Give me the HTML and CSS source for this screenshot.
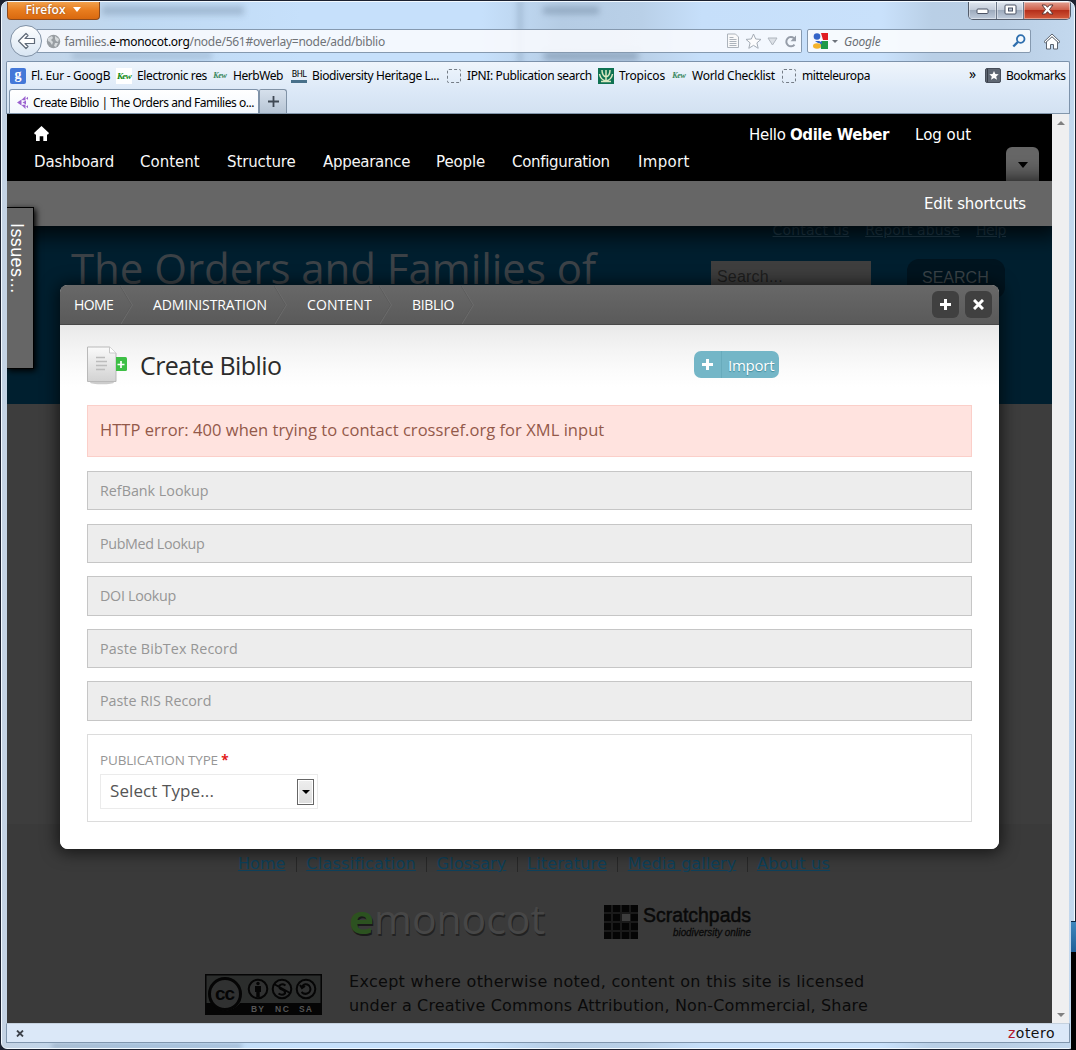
FILE: index.html
```
<!DOCTYPE html>
<html lang="en">
<head>
<meta charset="utf-8">
<title>Create Biblio | The Orders and Families of Monocotyledons</title>
<link rel="stylesheet" href="styles.css">
</head>
<body>
<div class="window">
  <i class="smudge s1"></i><i class="smudge s2"></i><i class="smudge s3"></i><i class="smudge s4"></i><i class="smudge s5"></i><i class="smudge s6"></i>

  <header class="titlebar">
    <div class="ff-button"><span>Firefox</span><i class="caret"></i></div>
    <div class="controls">
      <span class="ctl min"><svg width="13" height="7"><rect x="1" y="1" width="11" height="4.5" rx="1" fill="#fff" stroke="#4b5264"/></svg></span>
      <span class="ctl max"><svg width="13" height="11"><rect x="1" y="1" width="11" height="9" rx="1" fill="#fff" stroke="#4b5264"/><rect x="4.5" y="4" width="4" height="3" fill="#b9c2cf" stroke="#4b5264"/></svg></span>
      <span class="ctl close"><svg width="13" height="11" viewBox="0 0 13 11"><path d="M1 1h3.5l2 2.3L8.500 1H12L8.500 5.500 12 10H8.500L6.500 7.700 4.500 10H1l3.500-4.500z" fill="#fff" stroke="#5b3535"/></svg></span>
    </div>
  </header>

  <div class="navbar">
    <div class="back"><svg width="19" height="18" viewBox="0 0 19 18"><path d="M1.500 9L9 1.500l2 2L8 6.500h9.500v5H8l3 3-2 2z" fill="#fff" stroke="#5f6a78" stroke-width="1.200" stroke-linejoin="round"/></svg></div>
    <div class="urlbar">
      <svg class="globe" width="15" height="15" viewBox="0 0 15 15"><circle cx="7.500" cy="7.500" r="6.700" fill="#989da2"/><path d="M2 4l4-2 1 2-2 2 2 2-1 3-2-3-2-1zM9 2l4 3-1 3-2-1-1-2zM9 9l3 0-2 4-2-1z" fill="#d6dadd"/></svg>
      <span class="url">families.<b>e-monocot.org</b>/node/561#overlay=node/add/biblio</span>
      <div class="url-icons">
        <svg width="14" height="16" viewBox="0 0 14 16"><path d="M1.500 1h8l3 3v10.500h-11z" fill="#fafafa" stroke="#a5acb4"/><path d="M3.500 4.500h4M3.500 6.500h7M3.500 8.500h7M3.500 10.500h7M3.500 12.500h7" stroke="#a5acb4"/></svg>
        <svg width="17" height="17" viewBox="0 0 17 17"><path d="M8.500 1l2.200 5 5.300.4-4.100 3.500 1.300 5.400-4.700-2.900-4.700 2.900 1.300-5.400L1 6.400 6.300 6z" fill="#fdfdfd" stroke="#9ba3ad"/></svg>
        <svg width="11" height="9" viewBox="0 0 11 9"><path d="M1 1h9L5.500 8z" fill="#dadfe5" stroke="#a8afb8"/></svg>
        <svg width="13" height="13" viewBox="0 0 13 13"><path d="M10.500 9.600A4.600 4.600 0 1 1 10 3.300" fill="none" stroke="#8c94a0" stroke-width="2"/><path d="M12 .5v5.800H6.500z" fill="#8c94a0"/></svg>
      </div>
    </div>
    <div class="searchbar">
      <svg width="16" height="16"><rect width="16" height="16" fill="#f7f7fb"/><path d="M9 0h7v7h-5z" fill="#e01c22"/><path d="M8 8h8v8H9z" fill="#1f9a48"/><circle cx="5" cy="3.500" r="3.300" fill="#3465c8"/><path d="M3 8h7v3l-4-1z" fill="#3465c8"/><ellipse cx="5" cy="13" rx="4" ry="2.800" fill="#f4b32b"/><path d="M7 6l4 1-3 2z" fill="#fff"/></svg>
      <i class="caret small"></i>
      <em>Google</em>
      <svg class="mag" width="14" height="14" viewBox="0 0 14 14"><circle cx="8.700" cy="5" r="3.800" fill="#f4f9fd" stroke="#2f6fae" stroke-width="1.800"/><path d="M5.800 8L1.300 12.500" stroke="#2f6fae" stroke-width="2.400"/></svg>
    </div>
    <svg class="home" width="18" height="17" viewBox="0 0 18 17"><path d="M3.500 8.500v7.500h4v-4.500h3V16h4V8.500L9 3.500z" fill="#fff" stroke="#5d6570"/><path d="M1 8.700L9 1l8 7.700-1.300 1.200L9 3.700 2.300 9.900z" fill="#fff" stroke="#5d6570"/></svg>
  </div>

  <div class="toolbox">
    <div class="bookmarks">
      <a><i class="fav goog">g</i><span class="t1">Fl. Eur - GoogB</span></a>
      <a><i class="fav kew bold">Kew</i><span class="t2">Electronic res</span></a>
      <a><i class="fav kew">Kew</i><span class="t3">HerbWeb</span></a>
      <a><i class="fav bhl">BHL</i><span class="t2">Biodiversity Heritage L...</span></a>
      <a><i class="fav blank"></i><span class="t2">IPNI: Publication search</span></a>
      <a><svg class="fav" width="16" height="16"><rect width="16" height="16" fill="#0f7252"/><path d="M8 2v12M8 13C4 12 2 9 1.500 6M8 13c4-1 6-4 6.500-7M8 9C5 8 4 5 4 2M8 9c3-1 4-4 4-7M3 13.500h10" fill="none" stroke="#d9e8c0" stroke-width="1.500"/></svg><span class="t4">Tropicos</span></a>
      <a><i class="fav kew">Kew</i><span class="t1">World Checklist</span></a>
      <a><i class="fav blank"></i><span class="t3">mitteleuropa</span></a>
      <span class="more">»</span>
      <a><svg class="fav" width="16" height="15" viewBox="0 0 16 15"><rect x=".5" y=".5" width="15" height="14" rx="1.500" fill="#5f6773" stroke="#464d59"/><path d="M2.500 1v13" stroke="#383e48"/><path d="M9 3l1.400 3 3.300.3-2.500 2.200.8 3.300L9 10.100l-3 1.700.8-3.300-2.500-2.200L7.600 6z" fill="#fff"/></svg><span class="t5">Bookmarks</span></a>
    </div>
    <div class="tabs">
      <div class="tab"><svg width="11" height="13" viewBox="0 0 11 13"><path d="M0 6.500L4.500 3.500v6zM4.500 4L8.500 0v4.500zM4.500 9l4 4V8.500zM5.500 6.500L9 4.500v4zM9 2.500L11 .8v3zM9 10.500l2 1.700v-3z" fill="#9b63cf"/></svg><span>Create Biblio | The Orders and Families o...</span></div>
      <div class="newtab"><svg width="11" height="11"><path d="M5.500 0v11M0 5.500h11" stroke="#3f4853" stroke-width="1.800"/></svg></div>
    </div>
  </div>

  <div class="viewport">
    <main class="page">
      <div class="admin">
        <svg class="ahome" width="15" height="15" viewBox="0 0 15 15"><path d="M7.500 0L15 7l-1 1.500h-1V15H9.300v-4.800H5.700V15H2V8.500H1L0 7z" fill="#fff"/></svg>
        <nav class="menu"><a class="m1">Dashboard</a><a>Content</a><a class="m1">Structure</a><a class="m2">Appearance</a><a class="m1">People</a><a class="m2">Configuration</a><a class="m3">Import</a></nav>
        <div class="user"><span class="m2">Hello <b>Odile Weber</b></span><a>Log out</a></div>
        <div class="toggle"><i></i></div>
      </div>
      <div class="shortcuts"><a>Edit shortcuts</a></div>
      <section class="banner">
        <h2>The Orders and Families of</h2>
        <div class="banner-right">
          <p class="toplinks"><a>Contact us</a><a>Report abuse</a><a>Help</a></p>
          <div class="searchrow"><span class="field">Search...</span><span class="btn">SEARCH</span></div>
        </div>
      </section>
      <section class="content"></section>
      <footer class="footer">
        <nav class="flinks"><a>Home</a><a class="f3">Classification</a><a>Glossary</a><a class="f2">Literature</a><a>Media gallery</a><a class="f3">About us</a></nav>
        <div class="logos">
          <svg width="202" height="60" viewBox="0 -8 202 60"><g font-family="Open Sans, sans-serif" font-size="40"><text x="3" y="36.500" font-weight="700" fill="#1a1a1a" textLength="25" lengthAdjust="spacingAndGlyphs">e</text><text x="2" y="35" font-weight="700" fill="#2c5220" textLength="25" lengthAdjust="spacingAndGlyphs">e</text><text x="28" y="36.500" font-weight="400" fill="#222" textLength="171" lengthAdjust="spacingAndGlyphs">monocot</text><text x="27" y="35" font-weight="400" fill="#474747" textLength="171" lengthAdjust="spacingAndGlyphs">monocot</text></g></svg>
          <svg width="150" height="38" viewBox="0 0 150 38"><path d="M1 2h34v34H1z" fill="#1a1a1a"/><path d="M19 11h8v7h-8z" fill="#3d3d3d"/><path d="M1 2h7v7H1zM10 2h7v7h-7zM19 2h7v7h-7zM28 2h7v7h-7zM1 11h7v7H1zM10 11h7v7h-7zM28 11h7v7h-7zM1 20h7v7H1zM10 20h7v7h-7zM19 20h7v7h-7zM28 20h7v7h-7zM1 29h7v7H1zM10 29h7v7h-7zM19 29h7v7h-7zM28 29h7v7h-7z" fill="#050505"/><g font-family="Liberation Sans, sans-serif" fill="#090909"><text x="40" y="19" font-size="20" stroke="#090909" stroke-width=".5" textLength="108" lengthAdjust="spacingAndGlyphs">Scratchpads</text><text x="70" y="33" font-size="11" font-style="italic" stroke="#090909" stroke-width=".3" textLength="78" lengthAdjust="spacingAndGlyphs">biodiversity online</text></g></svg>
        </div>
        <div class="license">
          <svg width="117" height="41" viewBox="0 0 117 41"><rect x=".75" y=".75" width="115.500" height="39.500" fill="#2b2d2c" stroke="#050505" stroke-width="1.500"/><path d="M1 29h6c7 10 20 10 28 0h81v11H1z" fill="#050505"/><circle cx="20" cy="20" r="15.500" fill="#303131" stroke="#050505" stroke-width="3"/><text x="10" y="26" font-family="Liberation Sans, sans-serif" font-size="19" font-weight="700" fill="#050505" textLength="20">cc</text><g fill="#303131" stroke="#050505" stroke-width="2"><circle cx="53" cy="15" r="9.300"/><circle cx="77" cy="15" r="9.300"/><circle cx="101" cy="15" r="9.300"/><path d="M69 10l16 9M80.500 11.500q-3.500-2.500-6 0-1 3 2.500 4t3 4q-3 2.500-6.500 0M97 12.500q3-4 7-1 3 4 0 7-4 3-7.500-.5M95 11l2 3 3-2" fill="none"/></g><circle cx="53" cy="9.500" r="1.700" fill="#050505"/><path d="M50 12h6v6h-1.300v5h-3.400v-5H50z" fill="#050505"/><g font-family="Liberation Sans, sans-serif" font-size="8.500" font-weight="700" fill="#555"><text x="46" y="38" textLength="13">BY</text><text x="70" y="38" textLength="14">NC</text><text x="94" y="38" textLength="13">SA</text></g></svg>
          <p><span class="l1">Except where otherwise noted, content on this site is licensed</span><br><span class="l2">under a Creative Commons Attribution, Non-Commercial, Share</span></p>
        </div>
      </footer>

      <aside class="issues"><span>Issues...</span></aside>

      <section class="overlay">
        <div class="ohead">
          <nav class="crumbs"><a class="c1">HOME</a><a class="c2">ADMINISTRATION</a><a class="c3">CONTENT</a><a class="c4">BIBLIO</a></nav>
          <span class="obtn"><svg width="11" height="11"><path d="M5.500 0v11M0 5.500h11" stroke="#fff" stroke-width="3"/></svg></span>
          <span class="obtn"><svg width="11" height="11"><path d="M1 1l9 9M10 1l-9 9" stroke="#fff" stroke-width="3"/></svg></span>
        </div>
        <div class="obody">
          <div class="otitle">
            <svg width="42" height="40" viewBox="0 0 42 40"><defs><linearGradient id="pg" x2="0" y2="1"><stop offset="0" stop-color="#fafafa"/><stop offset="1" stop-color="#d2d2d2"/></linearGradient></defs><ellipse cx="15" cy="36.500" rx="12" ry="1.800" fill="#ccc"/><path d="M.5 1h22l6.500 6v28.500H.5z" fill="url(#pg)" stroke="#b9b9b9"/><path d="M22.500 1v6H29" fill="#fff" stroke="#c8c8c8"/><path d="M9 11.500h9M9 15.500h11M9 19.500h11M9 23.500h9" stroke="#bcbcbc" stroke-width="1.300"/><path d="M29 11h9.500q1.500 0 1.500 1.500v11q0 1.500-1.500 1.500H29z" fill="#3dbf45"/><path d="M34 15v7M30.500 18.500h7" stroke="#fff" stroke-width="1.700"/></svg>
            <h1>Create Biblio</h1>
            <a class="import"><span class="plus"><svg width="11" height="11"><path d="M5.500 0v11M0 5.500h11" stroke="#fff" stroke-width="3"/></svg></span><span>Import</span></a>
          </div>
          <div class="error">HTTP error: 400 when trying to contact crossref.org for XML input</div>
          <div class="rows">
            <div><span class="r1">RefBank Lookup</span></div>
            <div><span class="r2">PubMed Lookup</span></div>
            <div><span class="r3">DOI Lookup</span></div>
            <div><span class="r4">Paste BibTex Record</span></div>
            <div><span class="r1">Paste RIS Record</span></div>
          </div>
          <div class="type">
            <label>PUBLICATION TYPE <b>*</b></label>
            <div class="select"><span>Select Type...</span><i><b></b></i></div>
          </div>
        </div>
      </section>
    </main>
    <div class="scroll"><i class="up"></i><i class="down"></i></div>
  </div>

  <footer class="status"><svg width="8" height="7"><path d="M1 .5l6 6M7 .5l-6 6" stroke="#3f444c" stroke-width="1.800"/></svg><span><b>z</b>otero</span></footer>
</div>
<i class="desk"></i>
</body>
</html>
```
FILE: styles.css
```
* { box-sizing: border-box; }
body { margin: 0; width: 1076px; height: 1050px; overflow: hidden; background: #1b2130; position: relative; font-family: "Noto Sans", "Open Sans", sans-serif; }
i { font-style: normal; }
svg { display: block; flex: none; }

/* window frame */
.window { position: relative; width: 1074px; height: 1048px; margin: 1px 0 0 1px; border: 1px solid #f2f9ff; border-radius: 7px 7px 6px 6px; overflow: hidden; display: flex; flex-direction: column;
  background: linear-gradient(90deg, #c4d3e4 0, #bfd9f2 130px, #c6e0fb 300px, #c6e0fb 480px, #b5cce4 560px, #b9d0e8 640px, #c6dffa 700px, #c9e1fb 880px, #b9cfe6 930px, #b9cee4 1000px, #c3d8ee 1072px); }
.smudge { position: absolute; filter: blur(3px); background: #788fa8; opacity: .6; }
.s1 { left: 100px; top: 4px; width: 142px; height: 9px; opacity: .45; }
.s2 { left: 516px; top: -4px; width: 4px; height: 66px; opacity: .5; }
.s3 { left: 541px; top: 5px; width: 56px; height: 7px; }
.s4 { left: 542px; top: 50px; width: 94px; height: 8px; }
.s5 { left: 70px; top: 50px; width: 140px; height: 7px; opacity: .35; }
.s6 { left: 50px; top: 1042px; width: 190px; height: 4px; opacity: .5; filter: blur(2px); }

.titlebar { height: 27px; display: flex; justify-content: space-between; position: relative; flex: none; }
.ff-button { width: 93px; height: 18px; margin-left: 5px; display: flex; align-items: center; justify-content: center; gap: 7px; padding: 0 1px 2px 0; color: #fff; font: 600 12px "Open Sans", sans-serif; background: linear-gradient(#f0a04c, #e87c1e 50%, #d9690f); border: 1px solid #8c4a1d; border-top: 0; border-radius: 0 0 4px 4px; text-shadow: 0 0 2px #8c4a1d; }
.caret { border: 4px solid transparent; border-top: 5px solid #fff; border-bottom: 0; }
.controls { display: flex; height: 18px; width: 103px; margin-right: 3px; border: 1px solid #535c6b; border-top: 0; border-radius: 0 0 5px 5px; overflow: hidden; }
.ctl { display: flex; align-items: center; justify-content: center; width: 27px; padding-bottom: 2px; background: linear-gradient(#dfe6ef, #c3ccd9 45%, #9eabbd 50%, #bfcbdb); border-right: 1px solid #6c7788; box-shadow: inset 0 0 0 1px rgba(255,255,255,.4); }
.ctl.min { width: 28px; padding-top: 4px; }
.ctl.close { width: 46px; border: 0; background: linear-gradient(#e3a092, #cf604b 45%, #b52f1b 50%, #d35b3d); }

.navbar { height: 32px; display: flex; position: relative; flex: none; }
.back { width: 32px; height: 32px; margin: -4px 0 0 8px; border: 1px solid #8091a5; border-radius: 50%; background: linear-gradient(#fdfefe, #d9e6f3); display: flex; align-items: center; justify-content: center; z-index: 1; }
.urlbar { width: 765px; height: 24px; margin-left: -5px; border: 1px solid #8599af; border-left: 0; background: rgba(249,251,254,.88); display: flex; align-items: center; padding: 0 4px 0 9px; border-radius: 0 2px 2px 0; }
.url { font-size: 12px; letter-spacing: -.27px; color: #6f7378; margin-left: 3.500px; padding-top: 1px; }
.url b { font-weight: 400; color: #000; }
.url-icons { margin-left: auto; display: flex; align-items: center; gap: 5px; opacity: .9; }
.url-icons svg:last-child { margin-left: 1px; }
.searchbar { width: 224px; height: 24px; margin-left: 5px; border: 1px solid #8599af; border-radius: 2px; background: rgba(250,252,254,.92); display: flex; align-items: center; padding: 0 4px 0 4px; }
.caret.small { border-width: 3px; border-top: 3px solid #6d737b; border-bottom: 0; margin: 0 6px 0 4px; }
.searchbar em { font-size: 12px; color: #6a6e74; letter-spacing: -.2px; padding-top: 1px; }
.mag { margin-left: auto; }
.home { margin: 4px 0 0 12px; }

.toolbox { height: 53px; margin: 0 4px 0 4px; border: 1px solid #7c92ab; border-bottom-color: #8296ab; border-radius: 2px 2px 0 0; background: linear-gradient(#eff5fc, #dbe8f7 60%, #d3e1f1); position: relative; display: flex; flex-direction: column; flex: none; }
.bookmarks { height: 27px; display: grid; grid-template-columns: 106px 96px 79px 155px 152px 73px 110px 188px 16px 82px; align-items: center; padding: 0 0 0 3px; font-size: 12px; color: #000; white-space: nowrap; }
.bookmarks a { display: flex; align-items: center; gap: 5px; }
.fav { width: 16px; flex: none; text-align: center; }
.goog { height: 16px; border-radius: 2px; background: #4478d8; color: #fff; font: 700 14px/13px "Liberation Serif", serif; }
.kew { font: italic 700 8px/16px "Liberation Serif", serif; color: #36865a; letter-spacing: -.3px; }
.kew.bold { background: #fff; height: 16px; color: #0d8a10; font-size: 9px; letter-spacing: -.6px; }
.bhl { font: 9px/11px "DejaVu Sans Condensed", "DejaVu Sans", sans-serif; letter-spacing: -.5px; height: 14px; border-bottom: 3px solid #48708a; color: #000; }
.blank { width: 14px; height: 14px; margin: 0 1px; border: 1px dashed #747c86; border-radius: 2px; }
.t1 { letter-spacing: -.27px; } .t2 { letter-spacing: -.38px; } .t3 { letter-spacing: -.43px; } .t4 { letter-spacing: -.16px; } .t5 { letter-spacing: -.48px; }
.more { font-size: 14px; line-height: 14px; padding-bottom: 3px; }
.tabs { display: flex; height: 24px; padding-left: 2px; }
.tab { width: 250px; height: 24px; background: linear-gradient(#fff, #f3f8fd); border: 1px solid #7f93aa; border-bottom: 0; border-radius: 3px 3px 0 0; display: flex; align-items: center; padding: 2px 0 0 7px; font-size: 12px; letter-spacing: -.46px; color: #000; white-space: nowrap; }
.tab span { margin-left: 5px; }
.newtab { width: 28px; border: 1px solid #8092a6; border-bottom: 0; border-radius: 2px 3px 0 0; background: linear-gradient(#d6e0ec, #b7c5d5); display: flex; align-items: center; justify-content: center; }

/* viewport */
.viewport { height: 909px; margin: 0 5px; display: flex; flex: none; position: relative; }
.page { width: 1045px; height: 909px; position: relative; overflow: hidden; background: #3d3d3d; display: flex; flex-direction: column; font-family: "DejaVu Sans", sans-serif; }
.scroll { width: 17px; background: #efeff0; display: flex; flex-direction: column; justify-content: space-between; align-items: center; padding: 7px 0 6px; }
.up { border: 4px solid transparent; border-bottom: 4px solid #808080; border-top: 0; }
.down { border: 4px solid transparent; border-top: 4px solid #808080; border-bottom: 0; }

.admin { height: 67px; background: #000; color: #fff; font-size: 15px; line-height: 20px; display: grid; grid-template-columns: 715px 1fr 33px; grid-template-rows: 33px 34px; padding: 0 13px 0 27px; flex: none; z-index: 1; }
.ahome { margin-top: 12px; }
.user { grid-column: 2 / 4; grid-row: 1; display: flex; gap: 26px; padding-top: 11px; }
.user b { letter-spacing: -.42px; }
.menu { grid-column: 1; grid-row: 2; padding-top: 5px; display: grid; grid-template-columns: 106px 87px 96px 113px 76px 126px auto; }
.m1 { letter-spacing: -.13px; } .m2 { letter-spacing: -.3px; } .m3 { letter-spacing: .3px; }
.toggle { grid-column: 3; grid-row: 2; background: #666; border-radius: 6px 6px 0 0; display: flex; justify-content: center; padding-top: 15px; }
.toggle i { height: 0; border: 5px solid transparent; border-top: 6px solid #000; border-bottom: 0; }
.shortcuts { height: 45px; background: #666; color: #fff; font-size: 15px; line-height: 20px; letter-spacing: -.13px; text-align: right; padding: 13px 26px 0 0; flex: none; z-index: 1; box-shadow: 0 4px 20px 6px rgba(0,0,0,.75); }
.banner { height: 178px; flex: none; background: #001f2f; display: flex; justify-content: space-between; padding: 0 46px 0 64px; }
.banner h2 { margin: 13px 0 0; font: 400 42px/57px "Open Sans", sans-serif; letter-spacing: -.03px; color: #3c4247; white-space: nowrap; }
.banner-right { width: 295px; }
.toplinks { margin: -5px 0 0; font-size: 14px; line-height: 18px; display: flex; justify-content: flex-end; gap: 16px; color: #234152; white-space: nowrap; }
.toplinks a { text-decoration: underline; letter-spacing: .15px; }
.toplinks a:last-child { letter-spacing: -.5px; }
.searchrow { display: flex; justify-content: space-between; width: 294px; margin-top: 20px; font: 16px "Liberation Sans", sans-serif; }
.field { width: 160px; height: 34px; background: #3e3e3e; color: #1e1e1e; padding: 7px 6px; letter-spacing: .2px; margin-top: 2px; }
.btn { width: 98px; height: 40px; border-radius: 12px; background: #00141f; color: #3b4449; padding: 10px 0 0 15px; }
.content { height: 420px; flex: none; background: #3d3d3d; }
.footer { height: 199px; flex: none; background: #3a3a3a; padding-top: 29px; }
.flinks { display: flex; padding-left: 231px; font-size: 16px; line-height: 22px; letter-spacing: .05px; color: #0e415b; white-space: nowrap; }
.flinks a { text-decoration: underline; }
.flinks a + a { margin-left: 10.300px; position: relative; padding-left: 10.500px; }
.flinks a + a::before { content: ""; position: absolute; left: 0; top: 4px; height: 15px; border-left: 1px solid #282828; }
.flinks a.f2 { letter-spacing: .15px; } .flinks a.f3 { letter-spacing: .27px; }
.logos { display: flex; padding: 16px 0 0 340px; gap: 54px; height: 67px; }
.logos svg + svg { margin-top: 12px; }
.license { display: flex; padding: 32px 0 0 198px; }
.license p { margin: -4px 0 0 27px; font-size: 16px; line-height: 24px; color: #0a0a0a; white-space: nowrap; }
.license svg { margin-top: 0; }
.l1 { letter-spacing: .3px; } .l2 { letter-spacing: .16px; }

.issues { position: absolute; left: -1px; top: 93px; width: 28px; height: 162px; background: #666; border: 1px solid #000; box-shadow: 2px 2px 6px #000; z-index: 2; color: #fff; font: 18px/20px "Liberation Sans", sans-serif; writing-mode: vertical-rl; letter-spacing: .4px; padding: 15px 6px 0 0; text-align: left; }

/* overlay dialog */
.overlay { position: absolute; z-index: 3; left: 53px; top: 171px; width: 939px; height: 564px; border-radius: 8px; background: #fff; box-shadow: 0 1px 16px 3px rgba(0,0,0,.6); font-family: "Open Sans", sans-serif; }
.ohead { height: 40px; border-radius: 7px 7px 0 0; background: linear-gradient(#686868, #5a5a5a); border-bottom: 1px solid #484848; display: flex; align-items: center; padding-right: 7px; gap: 6px; }
.crumbs { display: flex; flex: 1; height: 39px; color: #fff; font-size: 14px; line-height: 40px; }
.crumbs a { position: relative; overflow: hidden; padding-left: 14px; white-space: nowrap; }
.crumbs a::after { content: ""; position: absolute; right: 4px; top: 6px; width: 27px; height: 27px; border: 1px solid #6d6d6d; border-left: 0; border-bottom: 0; box-shadow: -1px 1px 0 #565656 inset; box-shadow: inset -1px 1px 0 #5a5a5a; transform: scaleX(.6) rotate(45deg); }
.c1 { width: 79px; letter-spacing: -.6px; }
.c2 { width: 154px; letter-spacing: -.14px; }
.c3 { width: 105px; letter-spacing: .1px; }
.c4 { width: 82px; letter-spacing: -.35px; }
.obtn { width: 27px; height: 27px; border-radius: 6px; background: #404040; display: flex; align-items: center; justify-content: center; }
.obody { height: 524px; padding: 0 27px; background: linear-gradient(#e9e9e9, #f3f3f3 22px, #fbfbfb 45px, #fff 62px); border-radius: 0 0 8px 8px; }
.otitle { height: 80px; display: flex; padding-top: 21px; }
.otitle h1 { margin: -1px 0 0 11px; width: 554px; font-weight: 400; font-size: 25px; line-height: 40px; letter-spacing: -.55px; color: #2b2b2b; }
.import { width: 85px; height: 27px; margin-top: 5px; border-radius: 7px; background: #74b6c7; color: #fff; font-size: 15px; line-height: 28px; letter-spacing: -.25px; display: flex; text-shadow: 0 1px 1px #3f8899; }
.plus { width: 28px; margin-right: 6px; border-right: 1px solid #68abbc; display: flex; align-items: center; justify-content: center; }
.error { height: 52px; border: 1px solid #fbcfc9; background: #ffe3df; color: #93594a; font-size: 16.500px; line-height: 48px; letter-spacing: .04px; padding-left: 12px; }
.rows { display: grid; gap: 13.200px; padding: 14px 0 13.500px; font-size: 14.300px; color: #969696; }
.rows div { height: 39.400px; border: 1px solid #c6c6c6; background: #ededed; line-height: 37px; padding-left: 12px; }
.r2 { letter-spacing: -.37px; } .r3 { letter-spacing: -.29px; } .r4 { letter-spacing: .11px; }
.type { height: 88px; border: 1px solid #dcdcdc; padding: 15px 12px; background: #fff; }
.type label { display: block; font-size: 13.500px; line-height: 20px; letter-spacing: -.16px; color: #969696; }
.type label b { color: #e21a1a; }
.select { width: 218px; height: 35px; margin-top: 4px; border: 1px solid #ebebeb; display: flex; justify-content: space-between; align-items: center; padding: 0 3px 0 9px; color: #555; font-size: 17px; letter-spacing: .1px; }
.select span { padding-bottom: 2px; }
.select i { width: 17px; height: 26px; border: 1px solid #666; box-shadow: inset 0 0 0 1px #fff; background: linear-gradient(#eee, #ddd); display: flex; align-items: center; justify-content: center; }
.select i b { border: 4px solid transparent; border-top: 4px solid #000; border-bottom: 0; }

.status { height: 20px; margin: 0 4px; border: 1px solid #8096ae; border-top-color: #c5d1de; background: #dbe8f8; display: flex; justify-content: space-between; align-items: center; padding: 0 14px 0 9px; flex: none; font: 14px/16px "DejaVu Sans", sans-serif; letter-spacing: .5px; color: #111; position: relative; }
.status b { color: #b3162b; font-weight: 400; }

/* desktop visible past the window edge */
.desk { position: absolute; z-index: 5; right: 0; top: 921px; width: 5px; height: 129px; border-top: 1px solid #0c2744; background: linear-gradient(#3f87bd, #1f5f98 30px, #000 30px); }
```
